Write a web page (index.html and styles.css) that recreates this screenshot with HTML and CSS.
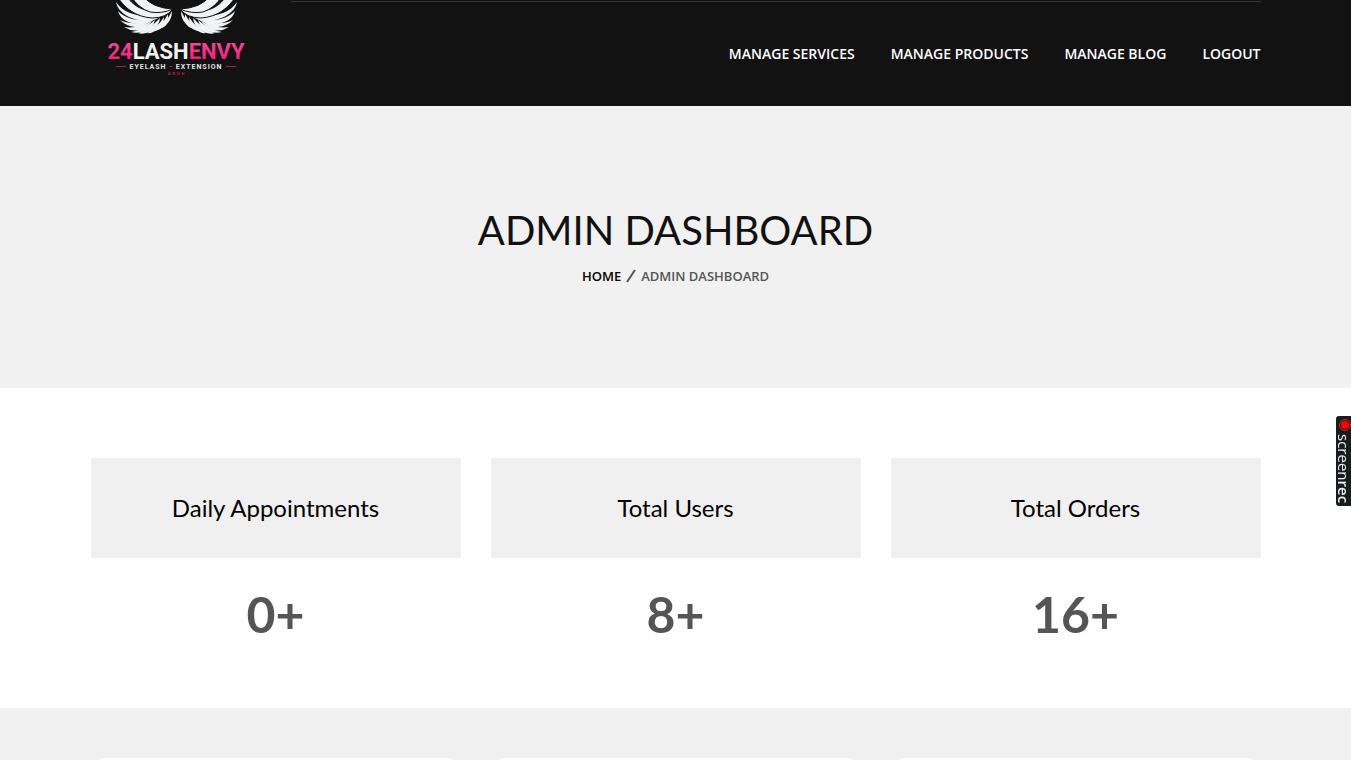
FILE: index.html
```html
<!DOCTYPE html>
<html lang="en">
<head>
<meta charset="utf-8">
<meta name="viewport" content="width=device-width, initial-scale=1">
<title>Admin Dashboard</title>
<link rel="stylesheet" href="styles.css">
</head>
<body>
<header class="site-header">
  <div class="container header-row">
    <a class="logo" href="#" aria-label="24LashEnvy">
      <svg width="150" height="80" viewBox="0 0 150 80">
        <defs>
          <linearGradient id="pink" x1="0" y1="0" x2="0" y2="1"><stop offset="0" stop-color="#f64fa8"/><stop offset="1" stop-color="#f31467"/></linearGradient>
          <g id="wing" fill="#f1f2f3">
            <path d="M61 28Q67 21 72 11Q72 19 67 24Q64 28 61 28Z"/>
            <path d="M54 31Q62 25 68 14Q69 22 63 27Q58 31 54 31Z"/>
            <path d="M47 33Q57 28 64 17Q64 25 58 29Q52 34 47 33Z"/>
            <path d="M38 33Q49 30 60 18Q59 27 51 31Q44 35 38 33Z"/>
            <path d="M31 32Q43 30 55 20Q53 28 45 31Q38 34 31 32Z"/>
            <path d="M24 27Q38 29 52 21Q47 28 40 30Q32 32 24 27Z"/>
            <path d="M20 20Q33 26 50 21Q43 28 35 27Q26 26 20 20Z"/>
            <path d="M18 11C27 20 40 22 56 18Q48 25 39 24C29 24 20 19 18 11Z"/>
            <path d="M16 2C23 13 38 18 61 16Q54 22 45 21C31 20 18 13 16 2Z"/>
            <path stroke="#121212" d="M27-4C34 8 48 15 73 9Q66 18 52 18C36 17 24 8 17-4Z"/>
            <path stroke="#121212" d="M43-4Q52 8 73 9Q62 14 50 12Q38 8 31-4Z"/>
          </g>
        </defs>
        <use href="#wing"/>
        <use href="#wing" transform="matrix(-1 0 0 1 153 0)"/>
        <text class="wordmark" x="76" y="59" text-anchor="middle"><tspan fill="url(#pink)">24</tspan><tspan fill="#f1f2f3">LASH</tspan><tspan fill="url(#pink)">ENVY</tspan></text>
        <path d="M16 66.500h10M126 66.500h10" stroke="#a91d57"/>
        <text class="tagline" x="76" y="69" text-anchor="middle">EYELASH <tspan fill="#e62a77">-</tspan> EXTENSION</text>
        <text class="tagline-small" x="77" y="75" text-anchor="middle">ARUH</text>
      </svg>
    </a>
    <nav class="main-nav" aria-label="Main">
      <a href="#">MANAGE SERVICES</a>
      <a href="#">MANAGE PRODUCTS</a>
      <a href="#">MANAGE BLOG</a>
      <a href="#">LOGOUT</a>
    </nav>
  </div>
</header>
<main>
  <section class="banner">
    <h1>ADMIN DASHBOARD</h1>
    <nav class="breadcrumb" aria-label="Breadcrumb">
      <a href="#">HOME</a>
      <svg width="10" height="14" viewBox="0 0 10 14" aria-hidden="true"><path d="M1 13 9 1" stroke="#555" stroke-width="2"/></svg>
      <span>ADMIN DASHBOARD</span>
    </nav>
  </section>
  <section class="container stats">
    <article><h2>Daily Appointments</h2><p>0+</p></article>
    <article><h2>Total Users</h2><p>8+</p></article>
    <article><h2>Total Orders</h2><p>16+</p></article>
  </section>
  <section class="panels">
    <div class="container panel-row">
      <div class="panel"></div>
      <div class="panel"></div>
      <div class="panel"></div>
    </div>
  </section>
</main>
<button class="recorder" type="button">
  <svg width="12" height="12" viewBox="0 0 12 12" aria-hidden="true"><circle cx="6" cy="6" r="5.500" fill="none" stroke="#d22"/><circle cx="6" cy="6" r="4" fill="#f00"/></svg>
  <span>screen<b>rec</b></span>
</button>
</body>
</html>
```

FILE: styles.css
```css
* { box-sizing: border-box; }
body {
  margin: 0;
  min-height: 100vh;
  display: flex;
  flex-direction: column;
  background: #fff;
  color: #555;
  font-family: "Open Sans", sans-serif;
}
a { color: inherit; text-decoration: none; }
h1, h2, p { margin: 0; }
.container {
  width: 100%;
  max-width: 1200px;
  margin: 0 auto;
  padding: 0 15px;
}
.site-header { background: #121212; padding-bottom: 26px; }
.header-row { display: flex; }
.logo { flex: 0 0 200px; padding-left: 9px; }
.logo svg { display: block; }
.wordmark { font: bold 22px Roboto, sans-serif; }
.tagline { font: bold 7px Roboto, sans-serif; letter-spacing: 1px; fill: #e5e5e5; }
.tagline-small { font: bold 4px Roboto, sans-serif; letter-spacing: 2px; fill: #c2205f; }
.main-nav {
  flex: 1;
  display: flex;
  justify-content: flex-end;
  align-items: flex-start;
  gap: 36px;
  margin-top: 1px;
  padding-top: 42px;
  border-top: 1px solid #333;
  color: #fff;
  font-size: 14px;
  font-weight: 600;
  line-height: 20px;
}
main { flex: 1; display: flex; flex-direction: column; }
.banner {
  padding: 99px 15px 102px;
  background: #f1f1f1;
  text-align: center;
}
.banner h1 {
  color: #111;
  font: 400 40px/50px Lato, sans-serif;
}
.breadcrumb {
  display: flex;
  justify-content: center;
  align-items: center;
  gap: 5px;
  padding-top: 11px;
  font-size: 13px;
  font-weight: 600;
  line-height: 20px;
}
.breadcrumb a { color: #000; }
.stats {
  display: grid;
  grid-template-columns: repeat(3, 1fr);
  gap: 30px;
  padding-top: 70px;
  padding-bottom: 64px;
  text-align: center;
}
.stats h2 {
  padding: 35px 15px;
  background: #f0f0f0;
  color: #000;
  font: 400 24px/30px Lato, sans-serif;
}
.stats p {
  padding-top: 26px;
  font: 700 50px/60px Lato, sans-serif;
}
.panels {
  flex: 1 0 52px;
  height: 52px;
  overflow: hidden;
  padding-top: 50px;
  background: #f0f0f0;
}
.panel-row {
  display: grid;
  grid-template-columns: repeat(3, 1fr);
  gap: 30px;
}
.panel { height: 200px; border-radius: 15px; background: #fff; }
.recorder {
  position: fixed;
  top: 416px;
  right: 0;
  width: 15px;
  height: 90px;
  padding: 3px 0 0;
  border: 0;
  border-radius: 3px 0 0 3px;
  background: #191c1c;
  color: #eee;
  display: flex;
  flex-direction: column;
  align-items: flex-end;
  gap: 3px;
  overflow: hidden;
  font: 15px/15px "Open Sans", sans-serif;
}
.recorder svg { flex: none; }
.recorder span { writing-mode: vertical-rl; white-space: nowrap; }
.recorder b { font-weight: 600; }
```
